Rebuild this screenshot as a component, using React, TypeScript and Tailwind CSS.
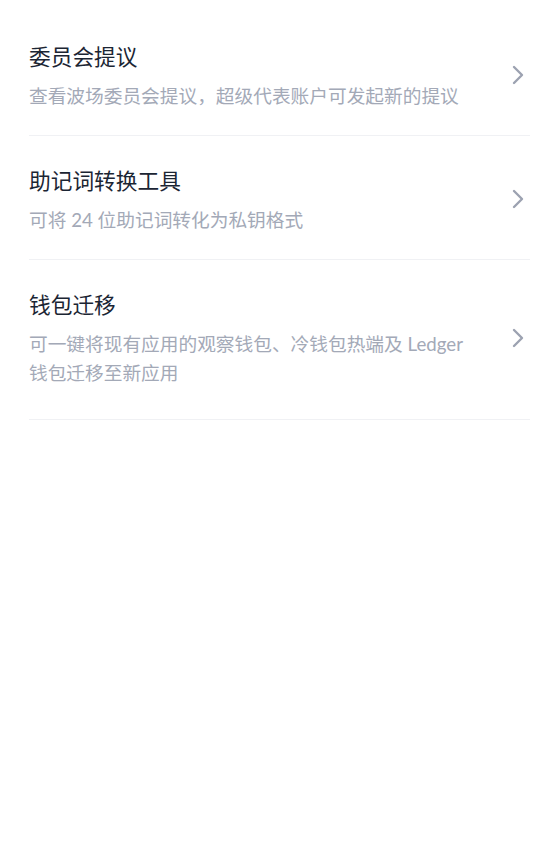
// 设置页中的工具列表

const items = [
  {
    title: '委员会提议',
    desc: '查看波场委员会提议，超级代表账户可发起新的提议',
  },
  {
    title: '助记词转换工具',
    desc: '可将 24 位助记词转化为私钥格式',
  },
  {
    title: '钱包迁移',
    desc: '可一键将现有应用的观察钱包、冷钱包热端及 Ledger 钱包迁移至新应用',
  },
]

const Chevron = () => (
  <svg width="14" height="20" viewBox="0 0 14 20" fill="none" className="shrink-0">
    <path d="M3 2 L11 10 L3 18" stroke="#9ca2b1" strokeWidth="2.4" strokeLinecap="round" strokeLinejoin="round" />
  </svg>
)

export default function App() {
  return (
    <div
      className="min-h-screen bg-white px-[29px] pt-[12px]"
      style={{ fontFamily: 'Lato, "Noto Sans CJK SC", sans-serif' }}
    >
      {items.map((item, i) => (
        <div
          key={item.title}
          className={`flex items-center justify-between border-b border-[#f0f1f4] pt-[29px] ${i === 2 ? 'pb-[31px]' : 'pb-[24px]'}`}
        >
          <div className="w-[450px]">
            <div className="text-[21.7px] leading-[32px] text-[#1b2533]">{item.title}</div>
            <div className="mt-[9px] text-[18.7px] leading-[29px] text-[#a3a9b7]">{item.desc}</div>
          </div>
          <div className="pr-[5px] pb-[2px]">
            <Chevron />
          </div>
        </div>
      ))}
    </div>
  )
}
